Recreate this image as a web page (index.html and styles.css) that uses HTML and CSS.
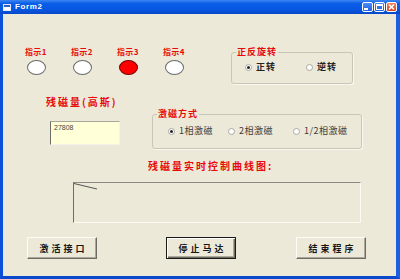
FILE: index.html
```html
<!DOCTYPE html>
<html>
<head>
<meta charset="utf-8">
<link rel="stylesheet" href="styles.css">
</head>
<body>
<div class="window">
  <div class="titlebar">
    <svg class="app-icon" width="8" height="7" viewBox="0 0 8 7"><rect x="0.5" y="0.5" width="7" height="6" fill="#fff" stroke="#dfe8ff"/><rect x="1" y="1" width="6" height="2" fill="#2a5fd0"/></svg>
    <span class="title">Form2</span>
    <div class="controls">
      <span class="cbtn cmin"><svg width="11" height="10" viewBox="0 0 11 10"><rect x="2" y="6" width="4" height="2" fill="#fff"/></svg></span>
      <span class="cbtn cmax"><svg width="11" height="10" viewBox="0 0 11 10"><rect x="2.5" y="2.5" width="6" height="5" fill="none" stroke="#fff"/><rect x="2" y="2" width="7" height="2" fill="#fff"/></svg></span>
      <span class="cbtn cclose"><svg width="11" height="10" viewBox="0 0 11 10"><path d="M3 2.5 L8 7.5 M8 2.5 L3 7.5" stroke="#fff" stroke-width="1.6"/></svg></span>
    </div>
  </div>
  <div class="frame-body">
    <div class="client">
      <div class="row1">
        <div class="indicators">
          <div class="ind"><span class="red-label small">指示1</span><span class="lamp"></span></div>
          <div class="ind"><span class="red-label small">指示2</span><span class="lamp"></span></div>
          <div class="ind"><span class="red-label small">指示3</span><span class="lamp on"></span></div>
          <div class="ind"><span class="red-label small">指示4</span><span class="lamp"></span></div>
        </div>
        <div class="group group-dir">
          <span class="group-title red-label">正反旋转</span>
          <div class="opts">
            <span class="opt"><span class="radio checked"></span><span class="opt-text bold">正转</span></span>
            <span class="opt"><span class="radio"></span><span class="opt-text bold">逆转</span></span>
          </div>
        </div>
      </div>
      <div class="row2">
        <div class="residual">
          <div class="red-label big">残磁量(高斯)</div>
          <div class="textbox">27808</div>
        </div>
        <div class="group group-mode">
          <span class="group-title red-label">激磁方式</span>
          <div class="opts">
            <span class="opt"><span class="radio checked"></span><span class="opt-text">1相激磁</span></span>
            <span class="opt"><span class="radio"></span><span class="opt-text">2相激磁</span></span>
            <span class="opt"><span class="radio"></span><span class="opt-text">1/2相激磁</span></span>
          </div>
        </div>
      </div>
      <div class="curve-title red-label">残磁量实时控制曲线图:</div>
      <div class="graph">
        <svg width="286" height="39" viewBox="0 0 286 39"><path d="M0 0.5 L23 6" stroke="#555" stroke-width="1" fill="none"/></svg>
      </div>
      <div class="buttons">
        <button class="btn btn-a">激活接口</button>
        <button class="btn btn-b default">停止马达</button>
        <button class="btn btn-c">结束程序</button>
      </div>
    </div>
  </div>
</div>
</body>
</html>
```

FILE: styles.css
```css
* { box-sizing: border-box; }
html, body { margin: 0; padding: 0; }
body {
  width: 400px;
  height: 279px;
  overflow: hidden;
  background: #ECE9D8;
  font-family: "Noto Sans CJK SC", sans-serif;
}
.window {
  width: 400px;
  height: 279px;
  display: flex;
  flex-direction: column;
}
.titlebar {
  height: 14px;
  flex: none;
  display: flex;
  align-items: center;
  padding-left: 3px;
  background: linear-gradient(to bottom, #3d86f0 0%, #0a5ee8 25%, #0756e0 70%, #0848c8 100%);
}
.app-icon { flex: none; }
.title {
  margin-left: 4px;
  color: #fff;
  font-family: "Liberation Sans", sans-serif;
  font-weight: bold;
  font-size: 8px;
  letter-spacing: 0.6px;
  line-height: 10px;
}
.controls {
  margin-left: auto;
  margin-right: 3px;
  display: flex;
  gap: 1px;
}
.cbtn {
  width: 11px;
  height: 10px;
  border: 1px solid #fff;
  border-radius: 2px;
  background: linear-gradient(#4a8cf8, #2060e0);
  display: block;
  position: relative;
  overflow: hidden;
}
.cbtn svg { display: block; margin: -1px 0 0 -1px; }
.cclose { background: linear-gradient(#f08a60, #d8401c); }
.frame-body {
  flex: 1;
  border-left: 3px solid #0a50d8;
  border-right: 4px solid #1c5fe0;
  border-bottom: 3px solid #0a48cc;
  display: flex;
}
.client {
  flex: 1;
  background: #ECE9D8;
  display: flex;
  flex-direction: column;
}
.red-label {
  color: #e80a0a;
  font-weight: bold;
}
.small { font-size: 8px; line-height: 9px; letter-spacing: 0.5px; }
.row1 {
  display: flex;
  align-items: flex-start;
  margin-top: 33px;
}
.indicators {
  display: flex;
  gap: 16px;
  padding-left: 18px;
}
.ind {
  width: 30px;
  display: flex;
  flex-direction: column;
  align-items: center;
  gap: 4px;
}
.lamp {
  width: 19px;
  height: 15px;
  border-radius: 50%;
  background: #fff;
  border: 1px solid #6a6a6a;
}
.lamp.on { background: #ff0000; border-color: #7a0000; }
.group {
  border: 1px solid #c8c6b6;
  border-radius: 3px;
  box-shadow: 1px 1px 0 #f8f7f0;
}
.group-title {
  display: block;
  width: max-content;
  margin: -6px 0 0 4px;
  padding: 0 1px;
  background: #ECE9D8;
  font-size: 9px;
  line-height: 10px;
  letter-spacing: 1px;
}
.group-dir {
  margin-left: 42px;
  margin-top: 5px;
  width: 122px;
  height: 32px;
}
.opts {
  display: flex;
  align-items: center;
  height: 10px;
}
.group-dir .opts { margin-top: 5px; padding-left: 13px; }
.group-dir .opt:first-child { width: 61px; }
.opt { display: flex; align-items: center; gap: 4px; }
.radio {
  width: 7px;
  height: 7px;
  border-radius: 50%;
  border: 1px solid #a8a8a0;
  background: #fff;
  display: flex;
  align-items: center;
  justify-content: center;
  flex: none;
}
.radio.checked::after {
  content: "";
  width: 3px;
  height: 3px;
  border-radius: 50%;
  background: #222;
}
.opt-text {
  font-size: 9px;
  line-height: 10px;
  color: #3a3a3a;
}
.opt-text.bold { font-weight: bold; color: #222; letter-spacing: 1px; }
.row2 {
  display: flex;
  align-items: flex-start;
  margin-top: 13px;
}
.residual {
  width: 149px;
  padding-left: 43px;
}
.big {
  font-size: 10px;
  line-height: 10px;
  letter-spacing: 2px;
}
.textbox {
  margin-top: 14px;
  margin-left: 4px;
  width: 70px;
  height: 24px;
  background: #FFFFD8;
  border-top: 1px solid #a8a69a;
  border-left: 1px solid #6e6d66;
  border-right: 1px solid #f4f3ea;
  border-bottom: 1px solid #f4f3ea;
  font-family: "Liberation Sans", sans-serif;
  font-size: 7px;
  line-height: 8px;
  color: #444;
  padding: 2px 0 0 3px;
}
.group-mode {
  margin-top: 17px;
  width: 210px;
  height: 35px;
}
.group-mode .opts { margin-top: 7px; padding-left: 15px; }
.group-mode .opt:nth-child(1) { width: 60px; }
.group-mode .opt:nth-child(2) { width: 65px; }
.group-mode .opt-text { letter-spacing: 0.5px; }
.curve-title {
  margin-top: 11px;
  margin-left: 145px;
  font-size: 10px;
  line-height: 11px;
  letter-spacing: 2px;
}
.graph {
  margin-top: 11px;
  margin-left: 70px;
  width: 288px;
  height: 41px;
  border-top: 1px solid #8c8a80;
  border-left: 1px solid #6e6d66;
  border-right: 1px solid #fbfaf4;
  border-bottom: 1px solid #fbfaf4;
}
.graph svg { display: block; }
.buttons {
  display: flex;
  margin-top: 14px;
}
.btn {
  width: 70px;
  height: 22px;
  padding: 0;
  margin: 0;
  background: #ECE9D8;
  border: 1px solid;
  border-color: #fdfdf8 #6e6c62 #6e6c62 #fdfdf8;
  box-shadow: inset -1px -1px 0 #aca899;
  font-family: "Noto Sans CJK SC", sans-serif;
  font-weight: bold;
  font-size: 9px;
  letter-spacing: 3px;
  color: #161616;
  text-indent: 3px;
}
.btn-a { margin-left: 24px; }
.btn-b { margin-left: 69px; }
.btn-c { margin-left: 60px; }
.btn.default {
  border: 1px solid #1a1a1a;
  box-shadow: inset 1px 1px 0 #fff, inset -1px -1px 0 #6e6c62, inset -2px -2px 0 #aca899;
}
```
